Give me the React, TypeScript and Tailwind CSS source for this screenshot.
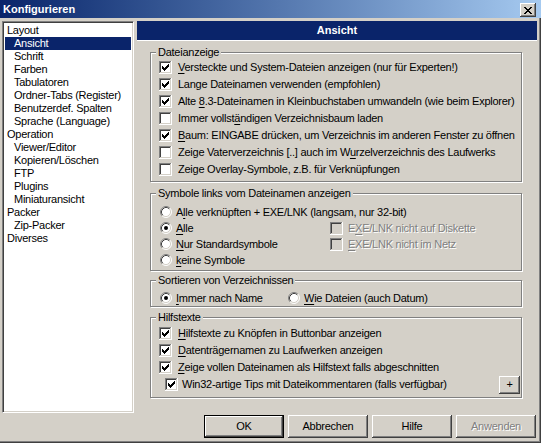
import React from 'react';

// Windows-classic "Konfigurieren" dialog

type TreeItem = { label: string; child?: boolean; selected?: boolean };

const tree: TreeItem[] = [
  { label: 'Layout' },
  { label: 'Ansicht', child: true, selected: true },
  { label: 'Schrift', child: true },
  { label: 'Farben', child: true },
  { label: 'Tabulatoren', child: true },
  { label: 'Ordner-Tabs (Register)', child: true },
  { label: 'Benutzerdef. Spalten', child: true },
  { label: 'Sprache (Language)', child: true },
  { label: 'Operation' },
  { label: 'Viewer/Editor', child: true },
  { label: 'Kopieren/Löschen', child: true },
  { label: 'FTP', child: true },
  { label: 'Plugins', child: true },
  { label: 'Miniaturansicht', child: true },
  { label: 'Packer' },
  { label: 'Zip-Packer', child: true },
  { label: 'Diverses' },
];

const Check = ({ checked, disabled }: { checked?: boolean; disabled?: boolean }) => (
  <span
    className={`flex h-[13px] w-[13px] shrink-0 items-center justify-center shadow-[inset_-1px_-1px_0_#fff,inset_1px_1px_0_#808080,inset_-2px_-2px_0_#d4d0c8,inset_2px_2px_0_#404040] ${
      disabled ? 'bg-[#d4d0c8]' : 'bg-white'
    }`}
  >
    {checked && (
      <svg width="7" height="7" viewBox="0 0 7 7" shapeRendering="crispEdges">
        <path d="M0 2h1v3H0zM1 3h1v3H1zM2 4h1v3H2zM3 3h1v3H3zM4 2h1v3H4zM5 1h1v3H5zM6 0h1v3H6z" fill="#000" />
      </svg>
    )}
  </span>
);

const Radio = ({ on }: { on?: boolean }) => (
  <svg width="12" height="12" viewBox="0 0 12 12" className="shrink-0">
    <circle cx="6" cy="6" r="5" fill="#fff" />
    <path d="M2.11 9.89A5.5 5.5 0 0 1 9.89 2.11" fill="none" stroke="#808080" />
    <path d="M9.89 2.11A5.5 5.5 0 0 1 2.11 9.89" fill="none" stroke="#fff" />
    <path d="M2.82 9.18A4.5 4.5 0 0 1 9.18 2.82" fill="none" stroke="#404040" />
    <path d="M9.18 2.82A4.5 4.5 0 0 1 2.82 9.18" fill="none" stroke="#d4d0c8" />
    {on && <circle cx="6" cy="6" r="2" fill="#000" />}
  </svg>
);

const Group = ({ title, className, children }: { title: string; className: string; children: React.ReactNode }) => (
  <div className={`relative w-[372px] border border-[#808080] shadow-[inset_1px_1px_0_#fff,1px_1px_0_#fff] ${className}`}>
    <span className="absolute left-[5px] top-[-7px] bg-[#d4d0c8] px-[2px] leading-[13px]">{title}</span>
    {children}
  </div>
);

const CheckRow = ({ checked, children }: { checked?: boolean; children: React.ReactNode }) => (
  <div className="flex h-[17px] items-center whitespace-nowrap pl-[8px]">
    <Check checked={checked} />
    <span className="ml-[6px]">{children}</span>
  </div>
);

const U = ({ children }: { children: React.ReactNode }) => <span className="underline underline-offset-[2px]">{children}</span>;

const raised = 'bg-[#d4d0c8] shadow-[inset_-1px_-1px_0_#404040,inset_1px_1px_0_#fff,inset_-2px_-2px_0_#808080]';

const App: React.FC = () => {
  return (
    <div className="flex h-[443px] w-[541px] flex-col overflow-hidden bg-[#d4d0c8] font-['Liberation_Sans',Arial,sans-serif] text-[11px] tracking-[-0.25px] text-black shadow-[inset_-1px_-1px_0_#404040,inset_-2px_-2px_0_#808080]">
      {/* Title bar */}
      <div className="flex h-[18px] shrink-0 items-start justify-between bg-linear-to-r from-[#0a246a] to-[#a6caf0] pl-[3px] pr-[5px]">
        <span className="text-[11px] font-bold leading-[18px] tracking-normal text-white">Konfigurieren</span>
        <button className={`mt-[3px] flex h-[14px] w-[16px] items-center justify-center ${raised}`}>
          <svg width="8" height="7" viewBox="0 0 8 7" shapeRendering="crispEdges">
            <path
              d="M0 0h2v1H0zM6 0h2v1H6zM1 1h2v1H1zM5 1h2v1H5zM2 2h4v1H2zM3 3h2v1H3zM2 4h4v1H2zM1 5h2v1H1zM5 5h2v1H5zM0 6h2v1H0zM6 6h2v1H6z"
              fill="#000"
            />
          </svg>
        </button>
      </div>

      {/* Body */}
      <div className="flex pl-[2px] pt-[3px]">
        {/* Tree */}
        <div className="h-[392px] w-[132px] shrink-0 border border-b-white border-l-[#808080] border-r-white border-t-[#808080] bg-white p-[1px] shadow-[inset_1px_1px_0_#404040,inset_-1px_-1px_0_#d4d0c8]">
          <div className="pt-[1px] pl-[1px] pr-[1px]">
            {tree.map((it) => (
              <div
                key={it.label}
                className={`h-[13px] whitespace-nowrap leading-[13px] ${it.child ? 'pl-[9px]' : 'pl-[2px]'} ${
                  it.selected ? 'bg-[#0a246a] text-white' : ''
                }`}
              >
                {it.label}
              </div>
            ))}
          </div>
        </div>

        {/* Right pane */}
        <div className="ml-[3px] w-[400px]">
          <div className="flex h-[20px] items-center justify-center border-b border-b-white bg-[#0a246a] font-bold tracking-normal text-white">
            Ansicht
          </div>

          <div className="pl-[13px]">
            <Group title="Dateianzeige" className="mt-[11px] pb-[3px] pt-[6px]">
              <CheckRow checked>
                <U>V</U>ersteckte und System-Dateien anzeigen (nur für Experten!)
              </CheckRow>
              <CheckRow checked>Lange Dateinamen verwenden (empfohlen)</CheckRow>
              <CheckRow checked>
                Alte <U>8</U>.3-Dateinamen in Kleinbuchstaben umwandeln (wie beim Explorer)
              </CheckRow>
              <CheckRow>
                Immer vollst<U>ä</U>ndigen Verzeichnisbaum laden
              </CheckRow>
              <CheckRow checked>
                <U>B</U>aum: EINGABE drücken, um Verzeichnis im anderen Fenster zu öffnen
              </CheckRow>
              <CheckRow>
                Zeige Vaterverzeichnis [..] auch im W<U>u</U>rzelverzeichnis des Laufwerks
              </CheckRow>
              <CheckRow>Zeige Overlay-Symbole, z.B. für Verknüpfungen</CheckRow>
            </Group>

            <Group title="Symbole links vom Dateinamen anzeigen" className="mt-[11px] pb-[2px] pt-[10px]">
              <div className="flex h-[16px] items-center whitespace-nowrap pl-[9px]">
                <Radio />
                <span className="ml-[4px]">
                  A<U>l</U>le verknüpften + EXE/LNK (langsam, nur 32-bit)
                </span>
              </div>
              <div className="flex h-[16px] items-center whitespace-nowrap pl-[9px]">
                <div className="flex w-[170px] items-center">
                  <Radio on />
                  <span className="ml-[4px]">
                    <U>A</U>lle
                  </span>
                </div>
                <Check disabled />
                <span className="ml-[5px] text-[#808080] [text-shadow:1px_1px_0_#fff]">
                  E<U>X</U>E/LNK nicht auf Diskette
                </span>
              </div>
              <div className="flex h-[16px] items-center whitespace-nowrap pl-[9px]">
                <div className="flex w-[170px] items-center">
                  <Radio />
                  <span className="ml-[4px]">
                    <U>N</U>ur Standardsymbole
                  </span>
                </div>
                <Check disabled />
                <span className="ml-[5px] text-[#808080] [text-shadow:1px_1px_0_#fff]">
                  <U>E</U>XE/LNK nicht im Netz
                </span>
              </div>
              <div className="flex h-[16px] items-center whitespace-nowrap pl-[9px]">
                <Radio />
                <span className="ml-[4px]">
                  <U>k</U>eine Symbole
                </span>
              </div>
            </Group>

            <Group title="Sortieren von Verzeichnissen" className="mt-[9px] pt-[9px]">
              <div className="flex h-[16px] items-center whitespace-nowrap pl-[9px]">
                <div className="flex w-[128px] items-center">
                  <Radio on />
                  <span className="ml-[4px]">
                    <U>I</U>mmer nach Name
                  </span>
                </div>
                <Radio />
                <span className="ml-[4px]">
                  <U>W</U>ie Dateien (auch Datum)
                </span>
              </div>
            </Group>

            <Group title="Hilfstexte" className="mt-[10px] pb-[4px] pt-[7px]">
              <CheckRow checked>
                <U>H</U>ilfstexte zu Knöpfen in Buttonbar anzeigen
              </CheckRow>
              <CheckRow checked>
                <U>D</U>atenträgernamen zu Laufwerken anzeigen
              </CheckRow>
              <CheckRow checked>
                <U>Z</U>eige vollen Dateinamen als Hilfstext falls abgeschnitten
              </CheckRow>
              <div className="flex h-[17px] items-center whitespace-nowrap pl-[14px] pr-[1px]">
                <Check checked />
                <span className="ml-[4px]">Win32-artige Tips mit Dateikommentaren (falls verfügbar)</span>
                <button className={`ml-auto flex h-[18px] w-[21px] items-center justify-center leading-none ${raised}`}>+</button>
              </div>
            </Group>
          </div>
        </div>
      </div>

      {/* Buttons */}
      <div className="mt-[2px] flex justify-end gap-[4px] pr-[5px]">
        <button className={`h-[23px] w-[80px] border border-black ${raised}`}>OK</button>
        <button className={`h-[23px] w-[80px] ${raised}`}>Abbrechen</button>
        <button className={`h-[23px] w-[80px] ${raised}`}>Hilfe</button>
        <button className={`h-[23px] w-[80px] text-[#808080] [text-shadow:1px_1px_0_#fff] ${raised}`}>Anwenden</button>
      </div>
    </div>
  );
};

export default App;
